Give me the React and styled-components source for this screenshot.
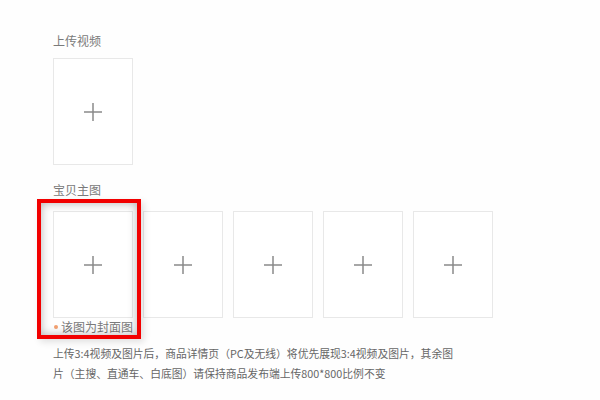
import React from "react";
import styled, { createGlobalStyle } from "styled-components";

const Global = createGlobalStyle`
  html, body { margin: 0; padding: 0; background: #fefefe; }
  body { font-family: "Noto Sans CJK SC", "Noto Sans", sans-serif; }
`;

const Page = styled.div`
  width: 600px;
  height: 400px;
  box-sizing: border-box;
  padding: 33px 0 0 53px;
  display: flex;
  flex-direction: column;
  align-items: flex-start;
  overflow: hidden;
`;

const Label = styled.div`
  font-size: 12px;
  line-height: 16px;
  color: #7a7a7a;
  margin-top: ${(p) => p.$top || 0}px;
  margin-bottom: ${(p) => p.$bottom || 0}px;
`;

const UploadBox = styled.div`
  width: 80px;
  height: 107px;
  box-sizing: border-box;
  border: 1px solid #e8e8e8;
  background: #fff;
  display: flex;
  align-items: center;
  justify-content: center;
`;

const Row = styled.div`
  display: flex;
  gap: 10px;
`;

const Column = styled.div`
  position: relative;
  display: flex;
  flex-direction: column;
  width: 80px;
`;

const Caption = styled.div`
  margin-top: 1px;
  font-size: 12px;
  line-height: 16px;
  color: #7a7a7a;
  white-space: nowrap;
  display: flex;
  align-items: center;
  gap: 3px;
`;

const Dot = styled.span`
  flex-shrink: 0;
  width: 4px;
  height: 4px;
  border-radius: 50%;
  background: #f3a070;
  margin-left: 1px;
`;

const Highlight = styled.div`
  position: absolute;
  left: -16px;
  top: -12px;
  width: 104px;
  height: 140px;
  box-sizing: border-box;
  border: 4.5px solid #f20000;
  box-shadow: inset 0 0 10px rgba(0, 0, 0, 0.3), 3px 3px 7px rgba(0, 0, 0, 0.12);
  pointer-events: none;
`;

const Desc = styled.p`
  margin: 8px 0 0;
  font-size: 10.8px;
  line-height: 20px;
  color: #666;
  white-space: nowrap;
`;

const Plus = () => (
  <svg width="20" height="20" viewBox="0 0 20 20">
    <path d="M10 1v18M1 10h18" stroke="#8a8a8a" strokeWidth="1.5" fill="none" />
  </svg>
);

export default function App() {
  return (
    <>
      <Global />
      <Page>
        <Label $bottom={9}>上传视频</Label>
        <UploadBox>
          <Plus />
        </UploadBox>
        <Label $top={17} $bottom={13}>宝贝主图</Label>
        <Row>
          <Column>
            <UploadBox>
              <Plus />
            </UploadBox>
            <Caption>
              <Dot />该图为封面图
            </Caption>
            <Highlight />
          </Column>
          {[0, 1, 2, 3].map((i) => (
            <UploadBox key={i}>
              <Plus />
            </UploadBox>
          ))}
        </Row>
        <Desc>
          上传3:4视频及图片后，商品详情页（PC及无线）将优先展现3:4视频及图片，其余图
          <br />
          片（主搜、直通车、白底图）请保持商品发布端上传800*800比例不变
        </Desc>
      </Page>
    </>
  );
}
